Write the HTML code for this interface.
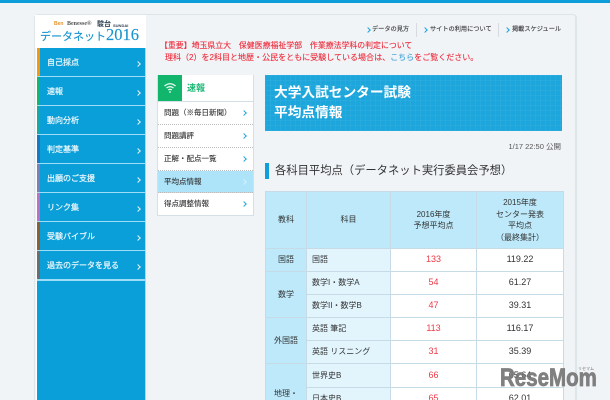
<!DOCTYPE html>
<html lang="ja"><head><meta charset="utf-8">
<style>
html,body{margin:0;padding:0;width:610px;height:400px;overflow:hidden}
body{background:#f0f4f7;font-family:"Liberation Sans","Noto Sans CJK JP",sans-serif;color:#333}
#root{position:absolute;left:0;top:0;width:610px;height:400px;overflow:hidden;background:#f0f4f7;filter:blur(.25px)}
#root div{position:absolute;white-space:nowrap}
.mi{left:37px;width:108px;height:28px;background:#0a9fd8}
.mi i{position:absolute;left:0;top:0;width:3px;height:100%}
.mi b{position:absolute;left:10px;top:8px;font-size:8px;line-height:13px;font-weight:normal;color:#e8f6fc;-webkit-text-stroke:.25px #e8f6fc;white-space:nowrap}
.mi u{position:absolute;left:99px;top:14px;width:3px;height:3px;border-top:1px solid #e8f6fc;border-right:1px solid #e8f6fc;transform:rotate(45deg)}
.sn{left:158px;width:95px;height:22px;background:#fff;border-bottom:1px dotted #bbb;font-size:7.500px;line-height:22px;color:#333;-webkit-text-stroke:.12px #333}
.sn span{position:absolute;left:6px;top:0;white-space:nowrap}
.sn u{position:absolute;left:84px;top:9px;width:3px;height:3px;border-top:1px solid #25a6dd;border-right:1px solid #25a6dd;transform:rotate(45deg)}
.tn{font-size:6.200px;line-height:10px;color:#444;top:25px;-webkit-text-stroke:.15px #444}
.ch{width:3px;height:3px;border-top:1.3px solid #1da4de;border-right:1.3px solid #1da4de;transform:rotate(45deg);top:28px}
.red{color:#ee2b3a;line-height:12px;-webkit-text-stroke:.12px #ee2b3a}
table{position:absolute;left:265px;top:191px;width:298px;border-collapse:collapse;table-layout:fixed;font-size:8px;color:#333}
td{border:1px solid #c6dbe6;text-align:center;padding:0;line-height:11.5px;background:#fff}
td.h{background:#bde9fa}
td.s{background:#e2f5fd;text-align:left;padding-left:5px}
.r{color:#ee3a45;font-size:9px}.n{font-size:9px}
</style></head><body><div id="root">
<div style="left:0;top:0;width:610px;height:2.5px;background:#0d9dd9"></div>
<div style="left:34px;top:14px;width:543px;height:390px;background:#f0f4f7;border:1px solid #dfe6ea;border-right-width:2px;border-radius:4px;box-sizing:border-box"></div>
<div style="left:35px;top:15px;width:111px;height:33px;background:#fff"></div>
<div style="left:54px;top:20px;font-size:5px;line-height:9px;color:#e8912a;font-weight:bold">Ben</div>
<div style="left:67px;top:20px;font-size:6px;line-height:9px;color:#555;font-weight:bold;font-family:'Liberation Serif',serif">Benesse®</div>
<div style="left:97px;top:19.500px;font-size:7px;line-height:10px;color:#345;font-weight:bold">駿台</div>
<div style="left:113px;top:20.500px;font-size:4px;line-height:9px;color:#345;font-weight:bold">SUNDAI</div>
<div style="left:40px;top:26px;font-size:11px;line-height:18px;color:#1a94cf;-webkit-text-stroke:.15px #1a94cf;font-family:'Liberation Serif','Noto Sans CJK JP',serif">データネット<span style="font-size:16.500px">2016</span></div>

<div style="left:36px;top:48px;width:110px;height:352px;background:#9fdcf5"></div>
<div style="left:36px;top:48px;width:1px;height:352px;background:#fff"></div>
<div class="mi" style="top:48px"><i style="background:#f39a0c"></i><b>自己採点</b><u></u></div>
<div class="mi" style="top:77px"><i style="background:#12b66f"></i><b>速報</b><u></u></div>
<div class="mi" style="top:106px"><i style="background:#1aa9a0"></i><b>動向分析</b><u></u></div>
<div class="mi" style="top:135px"><i style="background:#1a78c2"></i><b>判定基準</b><u></u></div>
<div class="mi" style="top:164px"><i style="background:#7f7fb8"></i><b>出願のご支援</b><u></u></div>
<div class="mi" style="top:193px"><i style="background:#bb72c4"></i><b>リンク集</b><u></u></div>
<div class="mi" style="top:222px"><i style="background:#8f5f33"></i><b>受験バイブル</b><u></u></div>
<div class="mi" style="top:251px"><i style="background:#6d6d6d"></i><b>過去のデータを見る</b><u></u></div>
<div style="left:37px;top:281px;width:108px;height:119px;background:#0a9fd8"></div>

<div class="ch" style="left:366px"></div><div class="tn" style="left:372px">データの見方</div>
<div style="left:416px;top:23px;width:1px;height:14px;background:#d5dbdf"></div>
<div class="ch" style="left:423px"></div><div class="tn" style="left:430px">サイトの利用について</div>
<div style="left:498px;top:23px;width:1px;height:14px;background:#d5dbdf"></div>
<div class="ch" style="left:505px"></div><div class="tn" style="left:512px">掲載スケジュール</div>

<div class="red" style="left:160px;top:40px;font-size:7.900px">【重要】埼玉県立大　保健医療福祉学部　作業療法学科の判定について</div>
<div class="red" style="left:165px;top:51.500px;font-size:8.030px">理科（2）を2科目と地歴・公民をともに受験している場合は、<span style="color:#3fa0d8;-webkit-text-stroke:.12px #3fa0d8">こちら</span>をご覧ください。</div>

<div style="left:157px;top:75px;width:97px;height:141px;background:#d5dfe6"></div>
<div style="left:158px;top:75px;width:95px;height:26px;background:#fff"></div>
<div style="left:158px;top:75px;width:24px;height:26px;background:#12b56c"></div>
<svg style="position:absolute;left:163px;top:82px" width="14" height="12" viewBox="0 0 14 12" fill="none" stroke="#e8fbf2" stroke-width="1.300"><path d="M1.500 4C5 1 9 1 12.500 4M3.500 6C5.700 4.300 8.300 4.300 10.500 6M5.300 8C6.300 7.200 7.700 7.200 8.700 8"/><circle cx="7" cy="10" r=".9" fill="#e8fbf2" stroke="none"/></svg>
<div style="left:187px;top:81px;font-size:9px;line-height:14px;font-weight:bold;color:#1fb877">速報</div>
<div class="sn" style="top:102px"><span>問題（※毎日新聞）</span><u></u></div>
<div class="sn" style="top:125px"><span>問題講評</span><u></u></div>
<div class="sn" style="top:148px"><span>正解・配点一覧</span><u></u></div>
<div class="sn" style="top:171px;height:21px;background:#aee4fa"><span>平均点情報</span><u style="border-color:#d5f1fc"></u></div>
<div class="sn" style="top:193px;height:22px;border:0"><span>得点調整情報</span><u></u></div>

<div style="left:265px;top:75px;width:297px;height:56px;background-color:#1ca6dc;background-image:linear-gradient(#3bb2e055 1px,transparent 1px),linear-gradient(90deg,#3bb2e055 1px,transparent 1px);background-size:5px 5px"></div>
<div style="left:274px;top:83px;font-size:13.700px;line-height:19.500px;font-weight:bold;color:#fff">大学入試センター試験<br>平均点情報</div>
<div style="right:49px;top:142px;font-size:7.500px;line-height:10px;color:#555">1/17 22:50 公開</div>
<div style="left:265px;top:163px;width:4px;height:16px;background:#0f9fdb"></div>
<div style="left:275px;top:163px;font-size:11.300px;line-height:16px;color:#333">各科目平均点（データネット実行委員会予想）</div>

<table>
<col style="width:41px"><col style="width:84px"><col style="width:86px"><col style="width:87px">
<tr style="height:57px"><td class="h">教科</td><td class="h">科目</td><td class="h">2016年度<br>予想平均点</td><td class="h">2015年度<br>センター発表<br>平均点<br>（最終集計）</td></tr>
<tr style="height:23px"><td class="h">国語</td><td class="s">国語</td><td class="r">133</td><td class="n">119.22</td></tr>
<tr style="height:23px"><td class="h" rowspan="2">数学</td><td class="s">数学I・数学A</td><td class="r">54</td><td class="n">61.27</td></tr>
<tr style="height:23px"><td class="s">数学II・数学B</td><td class="r">47</td><td class="n">39.31</td></tr>
<tr style="height:23px"><td class="h" rowspan="2">外国語</td><td class="s">英語 筆記</td><td class="r">113</td><td class="n">116.17</td></tr>
<tr style="height:23px"><td class="s">英語 リスニング</td><td class="r">31</td><td class="n">35.39</td></tr>
<tr style="height:24px"><td class="h" rowspan="2" style="vertical-align:top;padding-top:24px">地理・</td><td class="s">世界史B</td><td class="r">66</td><td class="n">65.64</td></tr>
<tr style="height:23px"><td class="s">日本史B</td><td class="r">65</td><td class="n">62.01</td></tr>
</table>

<div style="left:500px;top:362.500px;font-size:25px;line-height:30px;font-weight:bold;color:#777;-webkit-text-stroke:.8px #777;transform:scaleX(.82);transform-origin:0 0;opacity:.93">ReseMom</div>
<div style="left:578px;top:366px;font-size:4px;line-height:5px;color:#777">リセマム</div>
</div></body></html>
